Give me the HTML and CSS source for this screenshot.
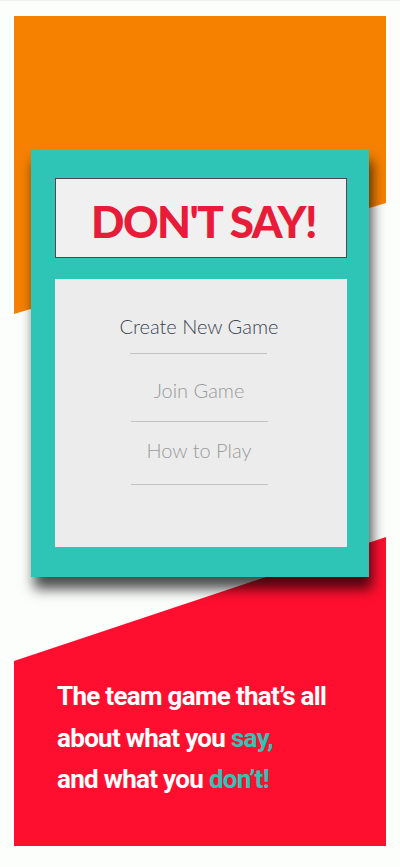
FILE: index.html
```html
<!DOCTYPE html>
<html lang="en">
<head>
<meta charset="utf-8">
<title>Don't Say!</title>
<link rel="stylesheet" href="styles.css">
</head>
<body>
<main class="page">
  <section class="card">
    <header class="title-box">
      <h1 class="title">DON'T SAY!</h1>
    </header>
    <nav class="menu">
      <a class="menu-item menu-item--primary" href="#">Create New Game</a>
      <a class="menu-item menu-item--second" href="#">Join Game</a>
      <a class="menu-item menu-item--third" href="#">How to Play</a>
    </nav>
  </section>
  <p class="tagline">The team game that’s all<br>about what you <span class="accent">say,</span><br>and what you <span class="accent">don’t!</span></p>
</main>
</body>
</html>
```

FILE: styles.css
```css
html, body {
  margin: 0;
  padding: 0;
}

body {
  background: #fcfefc;
  border-top: 1px solid #eef0ee;
}

.page {
  position: relative;
  margin: 15px 14px 21px;
  height: 830px;
  box-sizing: border-box;
  padding-top: 133px;
}

.page::before,
.page::after {
  content: "";
  position: absolute;
  left: 0;
  right: 0;
  z-index: 0;
}

.page::before {
  top: 0;
  height: 298px;
  background: #f68000;
  clip-path: polygon(0 0, 100% 0, 100% 187px, 0 298px);
}

.page::after {
  bottom: 0;
  height: 309px;
  background: #ff0f2f;
  clip-path: polygon(0 124px, 100% 0, 100% 100%, 0 100%);
}

.card {
  position: relative;
  z-index: 1;
  margin-left: 17px;
  width: 338px;
  box-sizing: border-box;
  padding: 29px 22px 30px 24px;
  background: #2ec5b6;
  box-shadow: 3px 12px 12px rgba(0, 0, 0, 0.7);
}

.title-box {
  height: 80px;
  box-sizing: border-box;
  border: 1px solid #4a4c4c;
  background: #f0f0f0;
  display: flex;
  align-items: center;
  justify-content: center;
  padding: 6px 0 0 5px;
}

.title {
  margin: 0;
  font-family: Lato, "Open Sans", sans-serif;
  font-weight: 900;
  font-size: 44px;
  line-height: 1;
  color: #e81b38;
  letter-spacing: -1.6px;
}

.menu {
  margin-top: 21px;
  height: 268px;
  background: #ececec;
  display: flex;
  flex-direction: column;
  align-items: center;
  padding-right: 4px;
  box-sizing: border-box;
}

.menu-item {
  display: block;
  text-align: center;
  text-decoration: none;
  white-space: nowrap;
  font-family: Lato, sans-serif;
  font-weight: 300;
  font-size: 20px;
  line-height: 24px;
  color: #999a9b;
}

.menu-item::after {
  content: "";
  display: block;
  width: 137px;
  margin: 0 auto;
  border-bottom: 1px solid #c2c2c2;
}

.menu-item--primary {
  color: #3a4552;
  margin-top: 35px;
}

.menu-item--primary::after {
  margin-top: 15px;
}

.menu-item--second {
  margin-top: 24px;
}

.menu-item--second::after {
  margin-top: 19px;
}

.menu-item--third {
  margin-top: 16px;
}

.menu-item--third::after {
  margin-top: 22px;
}

.tagline {
  position: relative;
  z-index: 1;
  margin: 99px 0 0;
  padding-left: 43px;
  font-family: Roboto, sans-serif;
  font-weight: 700;
  font-size: 26px;
  letter-spacing: -0.7px;
  line-height: 41.5px;
  color: #ffffff;
}

.accent {
  color: #2ec5b6;
}
```
